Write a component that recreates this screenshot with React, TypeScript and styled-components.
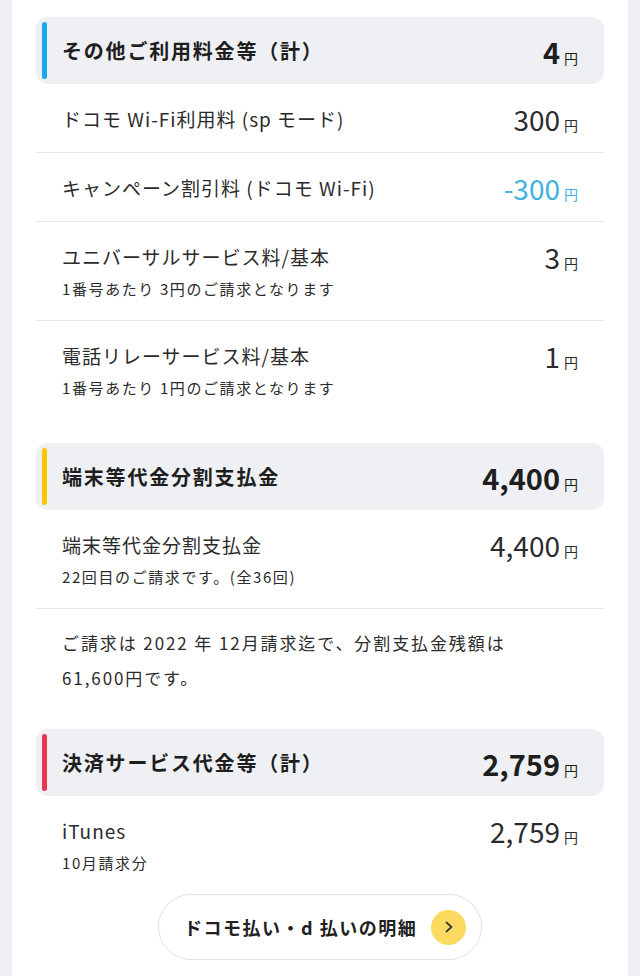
import styled, { createGlobalStyle } from "styled-components";

const GlobalStyle = createGlobalStyle`
  body {
    margin: 0;
    background: #eeeff3;
    font-family: "Noto Sans CJK JP", "Noto Sans", sans-serif;
    color: #2b2b2b;
  }
`;

const Page = styled.div`
  width: 640px;
  height: 976px;
  overflow: hidden;
  padding: 0 12px;
  box-sizing: border-box;
`;

const Card = styled.div`
  background: #ffffff;
  padding: 17px 24px 40px;
  min-height: 100%;
  box-sizing: border-box;
`;

const Section = styled.section`
  margin-bottom: 24px;
`;

const Header = styled.div`
  display: flex;
  align-items: center;
  height: 67px;
  box-sizing: border-box;
  padding: 5px 26px 5px 6px;
  background: #eff0f4;
  border-radius: 12px;
`;

const Bar = styled.span<{ $color: string }>`
  align-self: stretch;
  width: 5px;
  border-radius: 3px;
  background: ${(p) => p.$color};
  margin-right: 15px;
`;

const HeaderTitle = styled.h2`
  flex: 1;
  margin: 0;
  font-size: 20px;
  font-weight: 700;
  color: #1e1e1e;
  letter-spacing: 1.8px;
`;

const Row = styled.div`
  display: flex;
  justify-content: space-between;
  align-items: flex-start;
  padding: 22px 26px 20px;
  & + & {
    border-top: 1px solid #e5e6eb;
  }
`;

const Label = styled.div`
  font-size: 19px;
  line-height: 26px;
  letter-spacing: 1px;
  color: #2b2b2b;
`;

const Sub = styled.div`
  margin-top: 8px;
  font-size: 15px;
  line-height: 22px;
  letter-spacing: 1.6px;
  color: #2b2b2b;
`;

const Amount = styled.div<{ $bold?: boolean; $minus?: boolean }>`
  display: flex;
  align-items: baseline;
  height: 26px;
  line-height: 26px;
  white-space: nowrap;
  color: ${(p) => (p.$minus ? "#3fb0e2" : p.$bold ? "#1e1e1e" : "#2b2b2b")};
  b {
    font-size: ${(p) => (p.$bold ? "29px" : "28px")};
    font-weight: ${(p) => (p.$bold ? 700 : 400)};
  }
  small {
    font-size: 14px;
    margin-left: 4px;
  }
`;

const Note = styled.p`
  margin: 0;
  padding: 16px 26px 10px;
  border-top: 1px solid #e5e6eb;
  font-size: 17px;
  line-height: 35px;
  letter-spacing: 1.9px;
  color: #2b2b2b;
`;

const ButtonWrap = styled.div`
  display: flex;
  justify-content: center;
`;

const DetailButton = styled.button`
  display: flex;
  align-items: center;
  justify-content: space-between;
  width: 324px;
  height: 66px;
  padding: 0 15px 0 25px;
  box-sizing: border-box;
  background: #ffffff;
  border: 1px solid #dfe0e6;
  border-radius: 33px;
  font-family: inherit;
  font-size: 18px;
  font-weight: 700;
  color: #222222;
  letter-spacing: 1.5px;
`;

const Circle = styled.span`
  display: flex;
  align-items: center;
  justify-content: center;
  width: 35px;
  height: 35px;
  border-radius: 50%;
  background: #fcd95f;
`;

function Yen({ value, bold, minus }: { value: string; bold?: boolean; minus?: boolean }) {
  return (
    <Amount $bold={bold} $minus={minus}>
      <b>{value}</b>
      <small>円</small>
    </Amount>
  );
}

interface Item {
  label: string;
  sub?: string;
  value: string;
  minus?: boolean;
}

const others: Item[] = [
  { label: "ドコモ Wi-Fi利用料 (sp モード)", value: "300" },
  { label: "キャンペーン割引料 (ドコモ Wi-Fi)", value: "-300", minus: true },
  { label: "ユニバーサルサービス料/基本", sub: "1番号あたり 3円のご請求となります", value: "3" },
  { label: "電話リレーサービス料/基本", sub: "1番号あたり 1円のご請求となります", value: "1" },
];

function Rows({ items }: { items: Item[] }) {
  return (
    <>
      {items.map((it) => (
        <Row key={it.label}>
          <div>
            <Label>{it.label}</Label>
            {it.sub && <Sub>{it.sub}</Sub>}
          </div>
          <Yen value={it.value} minus={it.minus} />
        </Row>
      ))}
    </>
  );
}

function SectionHead({ title, total, color }: { title: string; total: string; color: string }) {
  return (
    <Header>
      <Bar $color={color} />
      <HeaderTitle>{title}</HeaderTitle>
      <Yen value={total} bold />
    </Header>
  );
}

export default function App() {
  return (
    <Page>
      <GlobalStyle />
      <Card>
        <Section>
          <SectionHead title="その他ご利用料金等（計）" total="4" color="#1ba8ec" />
          <Rows items={others} />
        </Section>

        <Section>
          <SectionHead title="端末等代金分割支払金" total="4,400" color="#f7c800" />
          <Rows
            items={[
              { label: "端末等代金分割支払金", sub: "22回目のご請求です。(全36回)", value: "4,400" },
            ]}
          />
          <Note>
            ご請求は 2022 年 12月請求迄で、分割支払金残額は
            <br />
            61,600円です。
          </Note>
        </Section>

        <Section>
          <SectionHead title="決済サービス代金等（計）" total="2,759" color="#e8364e" />
          <Rows items={[{ label: "iTunes", sub: "10月請求分", value: "2,759" }]} />
          <ButtonWrap>
            <DetailButton>
              ドコモ払い・d 払いの明細
              <Circle>
                <svg width="12" height="14" viewBox="0 0 12 14">
                  <path d="M3.5 2.5 L8.5 7 L3.5 11.5" fill="none" stroke="#3a3a3a" strokeWidth="1.8" strokeLinecap="round" strokeLinejoin="round" />
                </svg>
              </Circle>
            </DetailButton>
          </ButtonWrap>
        </Section>
      </Card>
    </Page>
  );
}
